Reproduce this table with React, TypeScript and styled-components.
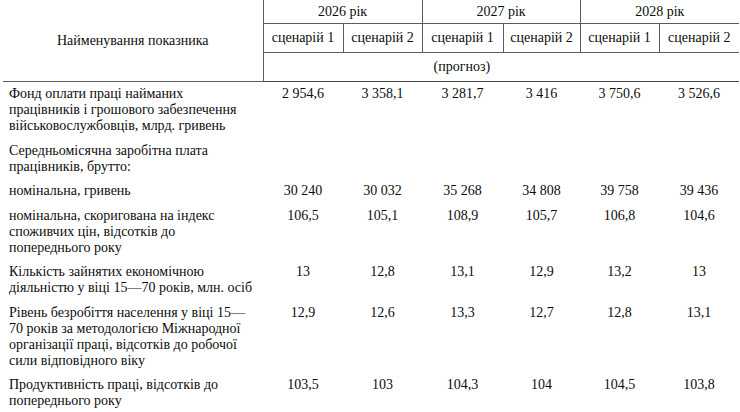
import React from 'react';
import styled, { createGlobalStyle } from 'styled-components';

const GlobalStyle = createGlobalStyle`
    html, body {
        margin: 0;
        padding: 0;
        background: #ffffff;
        overflow: hidden;
    }
    body {
        font-family: "Liberation Serif", "Times New Roman", serif;
        color: #0d0d0d;
    }
`;

const SERIF = '"Liberation Serif", "Times New Roman", serif';
const LINE = '#5c5c5c';

const Page = styled.div`
    width: 740px;
    height: 412px;
    overflow: hidden;
    padding-left: 3px;
`;

// tables don't inherit fonts in quirks mode, so the font goes here
const Table = styled.table`
    table-layout: fixed;
    border-collapse: collapse;
    width: 736px;
    font-family: ${SERIF};
    font-size: 14px;
    line-height: 16px;
    color: #0d0d0d;
`;

const TitleCell = styled.th`
    font-weight: normal;
    text-align: center;
    vertical-align: middle;
    padding: 0;
    border-right: 1px solid ${LINE};
    border-bottom: 1px solid ${LINE};
`;

const YearCell = styled.th`
    font-weight: normal;
    text-align: center;
    vertical-align: middle;
    height: 23px;
    padding: 0;
    border-left: 1px solid ${LINE};
    border-bottom: 1px solid ${LINE};
`;

const ScenarioCell = styled.th`
    font-weight: normal;
    text-align: center;
    vertical-align: middle;
    height: 28px;
    padding: 0;
    white-space: nowrap;
    border-left: 1px solid ${LINE};
    border-bottom: 1px solid ${LINE};
`;

const NoteCell = styled.th`
    font-weight: normal;
    text-align: left;
    vertical-align: middle;
    height: 28px;
    padding: 0 0 0 170px;
    border-bottom: 1px solid #4a4a4a;
`;

const LabelCell = styled.td<{ $pad: number }>`
    text-align: left;
    vertical-align: top;
    white-space: nowrap;
    padding: ${p => p.$pad}px 2px ${p => p.$pad}px 6px;
`;

const ValueCell = styled.td<{ $pad: number }>`
    text-align: center;
    vertical-align: top;
    white-space: nowrap;
    padding: ${p => p.$pad}px 0;
`;

interface Row {
    lines: string[];
    values: string[];
}

const widths = [260, 80, 79, 81, 77, 79, 80];
const years = ['2026 рік', '2027 рік', '2028 рік'];

const rows: Row[] = [
    {
        lines: ['Фонд оплати праці найманих', 'працівників і грошового забезпечення', 'військовослужбовців, млрд. гривень'],
        values: ['2 954,6', '3 358,1', '3 281,7', '3 416', '3 750,6', '3 526,6'],
    },
    {
        lines: ['Середньомісячна заробітна плата', 'працівників, брутто:'],
        values: ['', '', '', '', '', ''],
    },
    {
        lines: ['номінальна, гривень'],
        values: ['30 240', '30 032', '35 268', '34 808', '39 758', '39 436'],
    },
    {
        lines: ['номінальна, скоригована на індекс', 'споживчих цін, відсотків до', 'попереднього року'],
        values: ['106,5', '105,1', '108,9', '105,7', '106,8', '104,6'],
    },
    {
        lines: ['Кількість зайнятих економічною', 'діяльністю у віці 15—70 років, млн. осіб'],
        values: ['13', '12,8', '13,1', '12,9', '13,2', '13'],
    },
    {
        lines: [
            'Рівень безробіття населення у віці 15—',
            '70 років за методологією Міжнародної',
            'організації праці, відсотків до робочої',
            'сили відповідного віку',
        ],
        values: ['12,9', '12,6', '13,3', '12,7', '12,8', '13,1'],
    },
    {
        lines: ['Продуктивність праці, відсотків до', 'попереднього року'],
        values: ['103,5', '103', '104,3', '104', '104,5', '103,8'],
    },
];

const App = () => {
    return (
        <Page>
            <GlobalStyle />
            <Table>
                <colgroup>
                    {widths.map((w, i) => (
                        <col key={i} style={{ width: w }} />
                    ))}
                </colgroup>
                <thead>
                    <tr>
                        <TitleCell rowSpan={3}>Найменування показника</TitleCell>
                        {years.map(y => (
                            <YearCell key={y} colSpan={2}>
                                {y}
                            </YearCell>
                        ))}
                    </tr>
                    <tr>
                        {years.map(y => (
                            <React.Fragment key={y}>
                                <ScenarioCell>сценарій 1</ScenarioCell>
                                <ScenarioCell>сценарій 2</ScenarioCell>
                            </React.Fragment>
                        ))}
                    </tr>
                    <tr>
                        <NoteCell colSpan={6}>(прогноз)</NoteCell>
                    </tr>
                </thead>
                <tbody>
                    {rows.map((row, i) => (
                        <tr key={i}>
                            <LabelCell $pad={4.25}>
                                {row.lines.map((l, j) => (
                                    <React.Fragment key={j}>
                                        {j > 0 && <br />}
                                        {l}
                                    </React.Fragment>
                                ))}
                            </LabelCell>
                            {row.values.map((v, j) => (
                                <ValueCell key={j} $pad={4.25}>
                                    {v}
                                </ValueCell>
                            ))}
                        </tr>
                    ))}
                </tbody>
            </Table>
        </Page>
    );
};

export default App;
